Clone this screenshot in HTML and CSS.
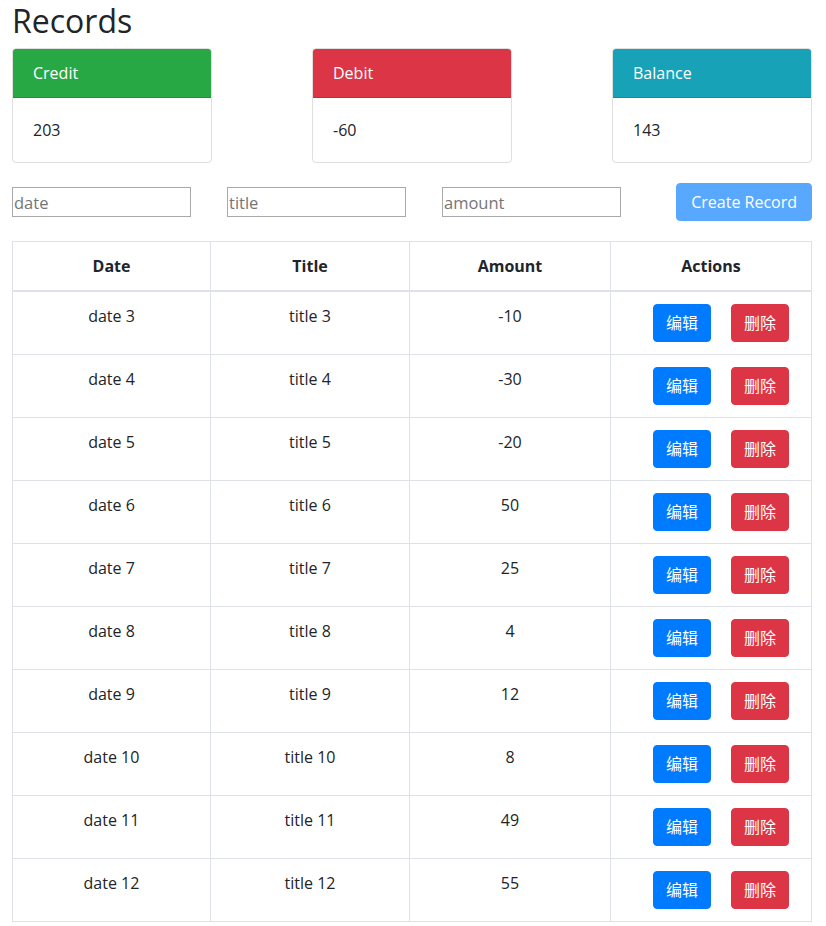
FILE: index.html
```html
<!DOCTYPE html>
<html lang="zh">
<head>
<meta charset="utf-8">
<title>Records</title>
<link rel="stylesheet" href="styles.css">
</head>
<body>
<div class="container">
  <h2 class="page-title">Records</h2>
  <div class="cards">
    <div class="card">
      <div class="card-header bg-success">Credit</div>
      <div class="card-body">203</div>
    </div>
    <div class="card">
      <div class="card-header bg-danger">Debit</div>
      <div class="card-body">-60</div>
    </div>
    <div class="card">
      <div class="card-header bg-info">Balance</div>
      <div class="card-body">143</div>
    </div>
  </div>
  <form class="record-form">
    <input class="field" type="text" placeholder="date">
    <input class="field" type="text" placeholder="title">
    <input class="field" type="text" placeholder="amount">
    <button class="btn btn-primary btn-disabled" type="button">Create Record</button>
  </form>
  <table class="table">
    <thead>
      <tr><th class="c1">Date</th><th class="c2">Title</th><th class="c3">Amount</th><th class="c4">Actions</th></tr>
    </thead>
    <tbody>
      <tr><td>date 3</td><td>title 3</td><td>-10</td><td><button class="btn btn-primary act">编辑</button><button class="btn btn-danger act">删除</button></td></tr>
      <tr><td>date 4</td><td>title 4</td><td>-30</td><td><button class="btn btn-primary act">编辑</button><button class="btn btn-danger act">删除</button></td></tr>
      <tr><td>date 5</td><td>title 5</td><td>-20</td><td><button class="btn btn-primary act">编辑</button><button class="btn btn-danger act">删除</button></td></tr>
      <tr><td>date 6</td><td>title 6</td><td>50</td><td><button class="btn btn-primary act">编辑</button><button class="btn btn-danger act">删除</button></td></tr>
      <tr><td>date 7</td><td>title 7</td><td>25</td><td><button class="btn btn-primary act">编辑</button><button class="btn btn-danger act">删除</button></td></tr>
      <tr><td>date 8</td><td>title 8</td><td>4</td><td><button class="btn btn-primary act">编辑</button><button class="btn btn-danger act">删除</button></td></tr>
      <tr><td>date 9</td><td>title 9</td><td>12</td><td><button class="btn btn-primary act">编辑</button><button class="btn btn-danger act">删除</button></td></tr>
      <tr><td>date 10</td><td>title 10</td><td>8</td><td><button class="btn btn-primary act">编辑</button><button class="btn btn-danger act">删除</button></td></tr>
      <tr><td>date 11</td><td>title 11</td><td>49</td><td><button class="btn btn-primary act">编辑</button><button class="btn btn-danger act">删除</button></td></tr>
      <tr><td>date 12</td><td>title 12</td><td>55</td><td><button class="btn btn-primary act">编辑</button><button class="btn btn-danger act">删除</button></td></tr>
    </tbody>
  </table>
</div>
</body>
</html>
```
FILE: styles.css
```css
* { box-sizing: border-box; }
body {
  margin: 0;
  font-family: "Open Sans", "Noto Sans CJK SC", sans-serif;
  font-size: 16px;
  line-height: 1.5;
  color: #212529;
  background: #fff;
}
.container {
  width: 800px;
  margin: 0 0 0 12px;
}
.page-title {
  margin: 0 0 8px;
  padding-top: 2px;
  font-size: 32px;
  font-weight: 400;
  line-height: 38px;
}
.cards {
  display: flex;
  justify-content: space-between;
}
.card {
  width: 200px;
  border: 1px solid rgba(0,0,0,.125);
  border-radius: 4px;
  overflow: hidden;
}
.card-header {
  padding: 12px 20px;
  color: #fff;
  border-bottom: 1px solid rgba(0,0,0,.125);
}
.card-body { padding: 20px; }
.bg-success { background: #28a745; }
.bg-danger { background: #dc3545; }
.bg-info { background: #17a2b8; }
.record-form {
  display: flex;
  align-items: center;
  margin: 20px 0 20px;
}
.field {
  width: 179px;
  height: 30px;
  margin-right: 36px;
  padding: 0 1px;
  border: 1px solid #a9a9a9;
  font-family: inherit;
  font-size: 16.5px;
  color: #212529;
}
.field::placeholder { color: #757575; }
.btn {
  display: inline-block;
  padding: 6px 12px;
  font-family: inherit;
  font-size: 16px;
  line-height: 24px;
  border: 1px solid transparent;
  border-radius: 4px;
  color: #fff;
  cursor: pointer;
}
.record-form .btn { margin-left: auto; padding: 6px 14px; }
.btn-primary { background: #007bff; border-color: #007bff; }
.btn-danger { background: #dc3545; border-color: #dc3545; }
.btn-disabled { opacity: .65; }
.act { margin-left: 20px; }
.table {
  width: 799px;
  border-collapse: collapse;
  table-layout: fixed;
}
.table th, .table td {
  padding: 12px;
  border: 1px solid #dee2e6;
  text-align: center;
  vertical-align: top;
}
.table thead th {
  border-bottom: 2px solid #dee2e6;
  font-weight: 700;
}
.c1 { width: 198px; }
.c2 { width: 199px; }
.c3 { width: 201px; }
.c4 { width: 201px; }
```
